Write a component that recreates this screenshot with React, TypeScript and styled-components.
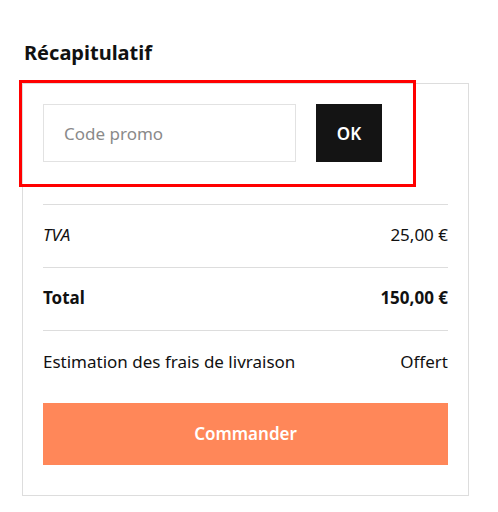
import styled, { createGlobalStyle } from 'styled-components';

const GlobalStyle = createGlobalStyle`
  * { box-sizing: border-box; }
  body {
    margin: 0;
    background: #ffffff;
    font-family: 'Noto Sans', 'Lato', sans-serif;
    color: #111111;
  }
`

const Page = styled.div`
  padding: 41px 29px 0 22px;
  width: 498px;
`

const Title = styled.h2`
  margin: 0 0 18px 2px;
  font-size: 20px;
  font-weight: 700;
  line-height: 24px;
  color: #111111;
`

const Card = styled.div`
  position: relative;
  width: 447px;
  border: 1px solid #dddddd;
  padding: 20px 20px 30px 20px;
`

const Highlight = styled.div`
  position: absolute;
  left: -4px;
  top: -4px;
  width: 397px;
  height: 107px;
  border: 3px solid #ff0000;
  pointer-events: none;
`

const PromoRow = styled.div`
  display: flex;
  gap: 20px;
  padding-bottom: 42px;
  border-bottom: 1px solid #dddddd;
`

const PromoInput = styled.input`
  width: 253px;
  height: 58px;
  border: 1px solid #e2e2e2;
  padding: 0 20px;
  font-family: inherit;
  font-size: 17px;
  color: #111111;
  outline: none;
  &::placeholder { color: #8a8a8a; }
`

const OkButton = styled.button`
  width: 66px;
  height: 58px;
  border: none;
  background: #141414;
  color: #ffffff;
  font-family: inherit;
  font-size: 17px;
  font-weight: 600;
  cursor: pointer;
`

const Line = styled.div<{ $last?: boolean }>`
  display: flex;
  justify-content: space-between;
  align-items: center;
  height: 63px;
  padding-bottom: 3px;
  border-bottom: ${p => (p.$last ? 'none' : '1px solid #dddddd')};
  font-size: 17px;
`

const Label = styled.span<{ $italic?: boolean; $bold?: boolean }>`
  font-style: ${p => (p.$italic ? 'italic' : 'normal')};
  font-weight: ${p => (p.$bold ? 700 : 400)};
`

const OrderButton = styled.button`
  display: block;
  width: 100%;
  height: 62px;
  margin-top: 9px;
  padding-bottom: 3px;
  border: none;
  background: #ff8759;
  color: #ffffff;
  font-family: inherit;
  font-size: 17px;
  font-weight: 600;
  cursor: pointer;
`

const lines = [
  { label: 'TVA', value: '25,00 €', italic: true },
  { label: 'Total', value: '150,00 €', bold: true },
  { label: 'Estimation des frais de livraison', value: 'Offert' },
]

const App = () => {
  return (
    <>
      <GlobalStyle />
      <Page>
        <Title>Récapitulatif</Title>
        <Card>
          <Highlight />
          <PromoRow>
            <PromoInput placeholder="Code promo" />
            <OkButton>OK</OkButton>
          </PromoRow>
          {lines.map((l, i) => (
            <Line key={l.label} $last={i === lines.length - 1}>
              <Label $italic={l.italic} $bold={l.bold}>{l.label}</Label>
              <Label $bold={l.bold}>{l.value}</Label>
            </Line>
          ))}
          <OrderButton>Commander</OrderButton>
        </Card>
      </Page>
    </>
  )
}

export default App
